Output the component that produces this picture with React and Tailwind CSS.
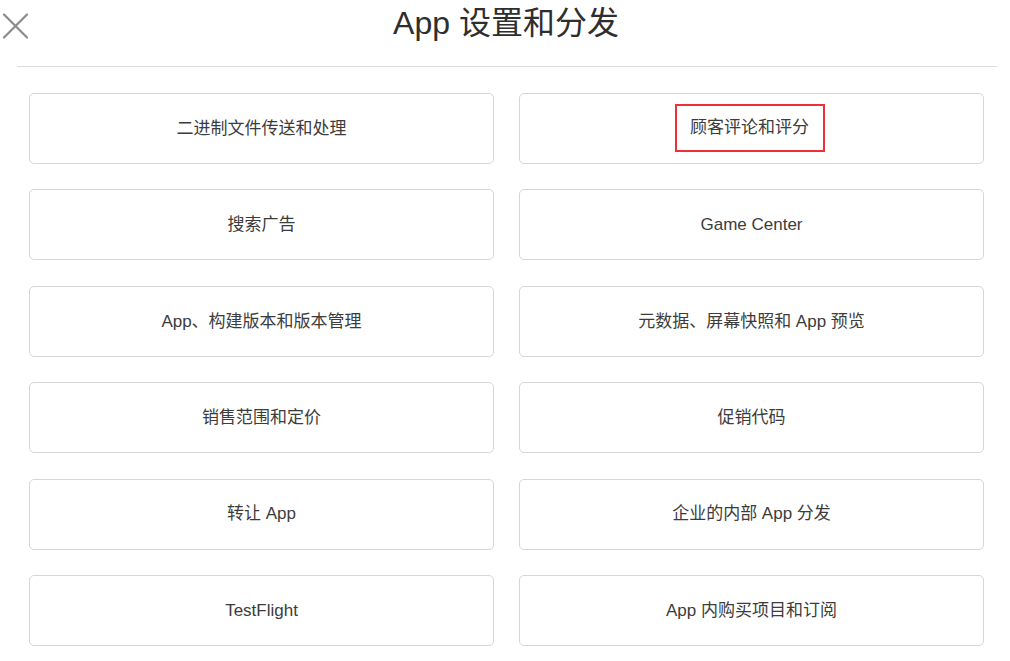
const items = [
  ["二进制文件传送和处理", "顾客评论和评分"],
  ["搜索广告", "Game Center"],
  ["App、构建版本和版本管理", "元数据、屏幕快照和 App 预览"],
  ["销售范围和定价", "促销代码"],
  ["转让 App", "企业的内部 App 分发"],
  ["TestFlight", "App 内购买项目和订阅"],
];

function CloseIcon() {
  return (
    <svg width="26" height="27" viewBox="0 0 26 27" fill="none">
      <path d="M2 2.5 L25 25.5 M25 2.5 L2 25.5" stroke="#8a8a8a" strokeWidth="2.2" strokeLinecap="round" />
    </svg>
  );
}

function Card({ label }) {
  const highlighted = label === "顾客评论和评分";
  return (
    <div className="h-[71px] flex items-center justify-center rounded-[5px] border border-[#d6d6d6] bg-white">
      {highlighted ? (
        <span className="flex items-center justify-center w-[150px] h-[48px] -translate-x-[2px] -translate-y-[1px] border-2 border-[#ee2f36] text-[17px] text-[#3c3c3c]">
          {label}
        </span>
      ) : (
        <span className="text-[17px] text-[#3c3c3c]">{label}</span>
      )}
    </div>
  );
}

export default function App() {
  return (
    <div
      className="w-[1010px] h-[661px] bg-white overflow-hidden"
      style={{ fontFamily: '"Liberation Sans", "Noto Sans CJK SC", sans-serif' }}
    >
      <header className="grid grid-cols-[1fr_auto_1fr] h-[46px] items-center">
        <div className="pl-[2px] pt-[4px] flex items-start">
          <CloseIcon />
        </div>
        <h1 className="text-[32px] leading-[46px] text-[#2e2e2e] pl-[2px]">App 设置和分发</h1>
        <div />
      </header>
      <div className="mt-[20px] ml-[17px] mr-[13px] border-b border-[#dcdcdc]" />
      <div className="ml-[29px] mt-[26px] w-[955px] grid grid-cols-2 gap-x-[25px] gap-y-[25.4px]">
        {items.map(([left, right]) => (
          <>
            <Card key={left} label={left} />
            <Card key={right} label={right} />
          </>
        ))}
      </div>
    </div>
  );
}
